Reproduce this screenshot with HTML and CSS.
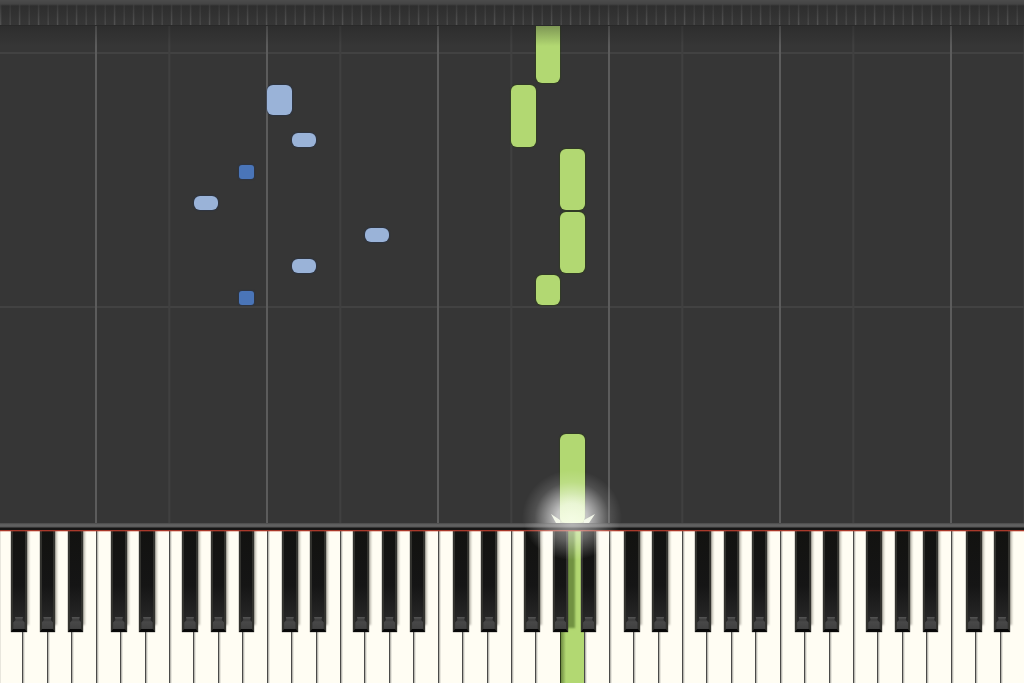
FILE: index.html
```
<!DOCTYPE html>
<html lang="en">
<head>
    <meta charset="UTF-8">
    <title>Piano Roll</title>
    <link rel="stylesheet" href="styles.css">
</head>
<body onload="drawPiano();">
    <main class="stage">
        <div class="top-bar"></div>
        <div class="roll">
            <div class="track" id="notes"></div>
        </div>
        <div class="rail"></div>
        <div class="keyboard">
            <div class="octaves" id="octaves"></div>
            <div class="track">
                <svg class="glow" viewBox="0 0 120 120" aria-hidden="true">
                    <defs>
                        <radialGradient id="halo">
                            <stop offset="0" stop-color="#fff" stop-opacity=".8"/>
                            <stop offset=".3" stop-color="#fff" stop-opacity=".7"/>
                            <stop offset=".5" stop-color="#fff" stop-opacity=".45"/>
                            <stop offset=".75" stop-color="#fff" stop-opacity=".13"/>
                            <stop offset="1" stop-color="#fff" stop-opacity="0"/>
                        </radialGradient>
                        <radialGradient id="spill">
                            <stop offset="0" stop-color="#fff" stop-opacity=".55"/>
                            <stop offset=".5" stop-color="#fff" stop-opacity=".32"/>
                            <stop offset="1" stop-color="#fff" stop-opacity="0"/>
                        </radialGradient>
                        <linearGradient id="beam" x1="0" y1="0" x2="0" y2="1">
                            <stop offset="0" stop-color="#f0ffd0" stop-opacity="0"/>
                            <stop offset="1" stop-color="#f8ffe6" stop-opacity=".7"/>
                        </linearGradient>
                        <clipPath id="above"><rect width="120" height="61"/></clipPath>
                        <clipPath id="below"><rect y="61" width="120" height="59"/></clipPath>
                    </defs>
                    <ellipse cx="60" cy="56" rx="50" ry="48" fill="url(#halo)" clip-path="url(#above)"/>
                    <ellipse cx="60" cy="60" rx="48" ry="38" fill="url(#spill)" clip-path="url(#below)"/>
                    <rect x="48" y="32" width="24" height="29" fill="url(#beam)"/>
                    <path d="M39 52 L48 58 V61 H44 Z M83 52 L72 58 V61 H77 Z" fill="#fbfff0" opacity=".9"/>
                </svg>
            </div>
        </div>
    </main>

    <script>
    const whiteNames = ['C', 'D', 'E', 'F', 'G', 'A', 'B'];

    // left edge of every black key, in % of the octave
    const blackKeys = [
        {name: 'C#', left: 9},
        {name: 'D#', left: 25.5},
        {name: 'F#', left: 50.6},
        {name: 'G#', left: 67.2},
        {name: 'A#', left: 83.8}
    ];

    const pressed = 'A4';

    // start: pixels left until the note hits the keys
    const notes = [
        {octave: 4, key: 'A', start: 0, length: 89, hand: 'right'},
        {octave: 4, key: 'G', start: 218, length: 30, hand: 'right'},
        {octave: 4, key: 'A', start: 250, length: 61, hand: 'right'},
        {octave: 4, key: 'A', start: 313, length: 61, hand: 'right'},
        {octave: 4, key: 'F', start: 376, length: 62, hand: 'right'},
        {octave: 4, key: 'G', start: 440, length: 80, hand: 'right'},
        {octave: 2, key: 'A#', start: 218, length: 14, hand: 'left'},
        {octave: 3, key: 'D', start: 250, length: 14, hand: 'left'},
        {octave: 3, key: 'G', start: 281, length: 14, hand: 'left'},
        {octave: 2, key: 'G', start: 313, length: 14, hand: 'left'},
        {octave: 2, key: 'A#', start: 344, length: 14, hand: 'left'},
        {octave: 3, key: 'D', start: 376, length: 14, hand: 'left'},
        {octave: 3, key: 'C', start: 408, length: 30, hand: 'left'}
    ];

    function drawPiano(){
        drawKeys();
        drawNotes();
    }

    function drawKeys(){
        let html = '';
        for (let octave = 1; octave <= 7; octave++){
            html += '<div class="octave">';
            for (let i = 0; i < whiteNames.length; i++){
                let name = whiteNames[i] + octave;
                let down = name === pressed ? ' down' : '';
                html += `<button type="button" class="white-key${down}" aria-label="${name}"></button>`;
            }
            for (let i = 0; i < blackKeys.length; i++){
                let key = blackKeys[i];
                html += `<button type="button" class="black-key" style="left:${key.left}%" aria-label="${key.name}${octave}"></button>`;
            }
            html += '</div>';
        }
        document.getElementById('octaves').innerHTML = html;
    }

    function drawNotes(){
        let html = '';
        for (let i = 0; i < notes.length; i++){
            let note = notes[i];
            let black = blackKeys.find(k => k.name === note.key);
            let offset = black ? black.left / 100 : whiteNames.indexOf(note.key) / 7;
            let left = note.octave - 1 + offset;
            html += `<div class="note ${note.hand}${black ? ' sharp' : ''}"
                style="left:calc(var(--octave) * ${left}); bottom:${note.start}px; height:${note.length}px"></div>`;
        }
        document.getElementById('notes').innerHTML = html;
    }
    </script>
</body>
</html>
```

FILE: styles.css
```
*{
    box-sizing:border-box;
}
:root{
    --octave: 16.7vw;
    --first: calc(var(--octave) * -0.438);
}
body{
    margin:0;
    background: #363636;
    font-family: "Liberation Sans", Arial, sans-serif;
}
.stage{
    display:flex;
    flex-direction:column;
    min-height:100vh;
    overflow:hidden;
}

/* ribbed bar */
.top-bar{
    height:26px;
    background:
        linear-gradient(#4c4c4c, #444 4px, transparent 6px),
        linear-gradient(rgba(40,40,40,.75), rgba(40,40,40,.2) 18px, transparent),
        repeating-linear-gradient(90deg, #5c5c5c 0, #484848 1px, #363636 2px, #363636 calc(var(--octave) / 18 - 1px), #404040 calc(var(--octave) / 18));
    border-bottom:1px solid #292929;
}

/* falling notes */
.roll{
    flex:1;
    position:relative;
    overflow:hidden;
    background:
        repeating-linear-gradient(0deg, transparent 0, transparent 215px, #424242 215px, #424242 217px, transparent 217px, transparent 254px),
        #363636;
}
.roll::before{
    content:"";
    position:absolute;
    top:0;
    bottom:0;
    left:calc(var(--first) - 1px);
    right:0;
    background:
        linear-gradient(90deg, #5c5c5c 2px, transparent 2px) 0 0 / var(--octave) 100%,
        linear-gradient(90deg, #404040 2px, transparent 2px) calc(var(--octave) * 3 / 7) 0 / var(--octave) 100%;
}
.roll::after{
    content:"";
    position:absolute;
    top:0;
    left:0;
    right:0;
    height:20px;
    background:linear-gradient(rgba(30,30,30,.35), transparent);
}
.track{
    position:absolute;
    top:0;
    bottom:0;
    left:var(--first);
}
.note{
    position:absolute;
    width:calc(var(--octave) / 7);
    border-radius:6px;
}
.note.right{
    background:#b2d872;
    box-shadow:0 0 1px 1px rgba(46,66,20,.5);
}
.note.left{
    background:#9ab3d8;
    box-shadow:0 0 1px 1px rgba(38,52,78,.5);
}
.note.left.sharp{
    width:calc(var(--octave) * 0.086);
    border-radius:3px;
    background:#4a75b8;
}

.rail{
    position:relative;
    z-index:1;
    height:7px;
    background:linear-gradient(#4a4a4a, #646464 2px, #585858 4px, #161616 5px, #161616);
}

/* keys */
.keyboard{
    position:relative;
    height:153px;
    background:#fffdf3;
}
.octaves{
    display:flex;
    height:100%;
    margin-left:calc(var(--octave) * -0.44);
}
.octave{
    position:relative;
    display:flex;
    flex:0 0 var(--octave);
}
.white-key{
    flex:1;
    padding:0;
    border:0;
    border-left:1px solid #4a4a48;
    background:linear-gradient(90deg, #a3a29c, #fffdf3 2px);
}
.white-key.down{
    border-left-color:#2c3a18;
    background:
        linear-gradient(90deg, #6f8c42, #b2d872 5px, #b2d872);
}
.black-key{
    position:absolute;
    top:0;
    width:9%;
    height:102px;
    padding:0;
    border:solid #32322e;
    border-width:0 2px 3px;
    border-bottom-color:#080808;
    background:linear-gradient(#121210 0, #151515 55px, #2c2c2c 100px);
    box-shadow:0 0 1px #222, 3px -6px 2px -1px rgba(90,86,76,.4);
}
/* rounded front of the key */
.black-key::before{
    content:"";
    position:absolute;
    left:0;
    right:0;
    bottom:0;
    height:12px;
    background:linear-gradient(#555, #3c3c3c 3px, #484848 5px, #404040);
    clip-path:polygon(15% 0, 85% 0, 80% 25%, 100% 45%, 100% 100%, 0 100%, 0 45%, 20% 25%);
}
/* the lowered key takes a wider shadow from the black key beside it */
.white-key.down ~ .black-key:nth-of-type(11){
    box-shadow:0 0 1px #222, 7px -4px 2px rgba(70,100,35,.6);
}
.keyboard::before{
    content:"";
    position:absolute;
    top:0;
    left:0;
    right:0;
    height:1px;
    background:#a8382a;
    box-shadow:0 1px rgba(190,70,50,.3);
    z-index:1;
}
.glow{
    position:absolute;
    z-index:2;
    top:-68px;
    left:calc(var(--octave) * 3 + var(--octave) * 5.5 / 7 - 60px);
    width:120px;
    height:120px;
    pointer-events:none;
}
```
